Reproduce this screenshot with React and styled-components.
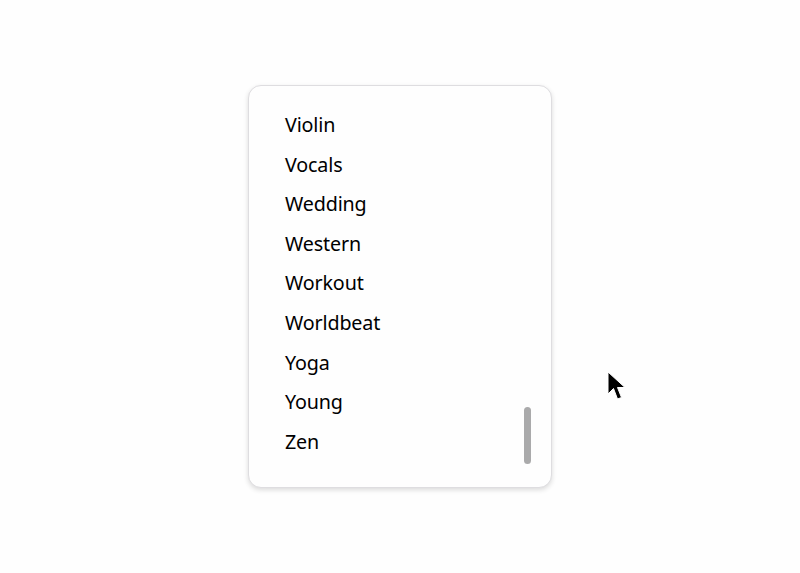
import React from "react";
import styled, { createGlobalStyle } from "styled-components";

const Global = createGlobalStyle`
  html, body { margin: 0; padding: 0; background: #fefefe; }
  #root { width: 800px; height: 573px; }
`;

const Stage = styled.div`
  position: relative;
  width: 800px;
  height: 573px;
  display: flex;
  align-items: center;
  justify-content: center;
`;

const Card = styled.div`
  position: relative;
  box-sizing: border-box;
  width: 304px;
  height: 403px;
  background: #fefefe;
  border: 1px solid #dedde0;
  border-radius: 13px;
  box-shadow: 0 2px 5px rgba(0, 0, 0, 0.14);
  padding: 19px 0 0 36px;
  overflow: hidden;
`;

const List = styled.ul`
  list-style: none;
  margin: 0;
  padding: 0;
`;

const Item = styled.li`
  height: 39.6px;
  line-height: 39.6px;
  font-family: "Noto Sans", sans-serif;
  font-size: 19.7px;
  color: #000;
  letter-spacing: -0.15px;
`;

const Thumb = styled.div`
  position: absolute;
  right: 20px;
  top: 321px;
  width: 7px;
  height: 57px;
  border-radius: 4px;
  background: #aaaaab;
`;

const Cursor = styled.svg`
  position: absolute;
  left: 607px;
  top: 371px;
`;

const items = ["Violin", "Vocals", "Wedding", "Western", "Workout", "Worldbeat", "Yoga", "Young", "Zen"];

export default function App() {
  return (
    <>
      <Global />
      <Stage>
        <Card>
          <List>
            {items.map((t) => (
              <Item key={t}>{t}</Item>
            ))}
          </List>
          <Thumb />
        </Card>
        <Cursor width="21" height="32" viewBox="0 0 21 32">
          <path d="M1 1 L1 23 L6.5 17.5 L10.5 28 L14.5 26.5 L10.5 16.5 L18 16.5 Z" fill="#000" stroke="#fff" strokeWidth="1" strokeLinejoin="round" />
        </Cursor>
      </Stage>
    </>
  );
}
